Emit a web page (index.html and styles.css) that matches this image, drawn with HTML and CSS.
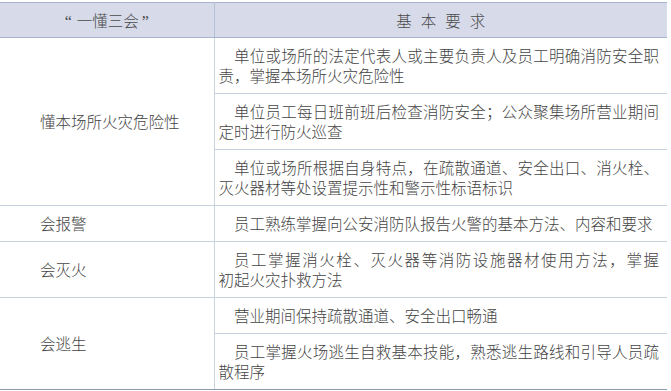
FILE: index.html
```html
<!DOCTYPE html>
<html lang="zh-CN">
<head>
<meta charset="utf-8">
<title>一懂三会</title>
<link rel="stylesheet" href="styles.css">
</head>
<body>
<table class="tbl">
  <colgroup><col class="col1"><col class="col2"></colgroup>
  <thead>
    <tr>
      <th class="h1"><span class="q ql">“</span>一懂三会<span class="q qr">”</span></th>
      <th class="h2"><span class="spaced">基本要求</span></th>
    </tr>
  </thead>
  <tbody>
    <tr>
      <td class="lab" rowspan="3">懂本场所火灾危险性</td>
      <td class="req"><div class="ln j ind">单位或场所的法定代表人或主要负责人及员工明确消防安全职</div><div class="ln">责，掌握本场所火灾危险性</div></td>
    </tr>
    <tr>
      <td class="req"><div class="ln j ind">单位员工每日班前班后检查消防安全；公众聚集场所营业期间</div><div class="ln">定时进行防火巡查</div></td>
    </tr>
    <tr>
      <td class="req"><div class="ln j ind">单位或场所根据自身特点，在疏散通道、安全出口、消火栓、</div><div class="ln">灭火器材等处设置提示性和警示性标语标识</div></td>
    </tr>
    <tr>
      <td class="lab">会报警</td>
      <td class="req"><div class="ln ind">员工熟练掌握向公安消防队报告火警的基本方法、内容和要求</div></td>
    </tr>
    <tr>
      <td class="lab">会灭火</td>
      <td class="req"><div class="ln j ind">员工掌握消火栓、灭火器等消防设施器材使用方法，掌握</div><div class="ln">初起火灾扑救方法</div></td>
    </tr>
    <tr>
      <td class="lab last" rowspan="2">会逃生</td>
      <td class="req"><div class="ln ind">营业期间保持疏散通道、安全出口畅通</div></td>
    </tr>
    <tr>
      <td class="req last"><div class="ln j ind">员工掌握火场逃生自救基本技能，熟悉逃生路线和引导人员疏</div><div class="ln">散程序</div></td>
    </tr>
  </tbody>
</table>
</body>
</html>
```

FILE: styles.css
```css
html, body {
  margin: 0;
  background: #ffffff;
}
body {
  padding-top: 2px;
  font-family: "Noto Sans CJK SC", "Liberation Serif", serif;
  font-size: 15.5px;
  font-weight: 300;
  color: #444444;
}
.tbl {
  border-collapse: collapse;
  table-layout: fixed;
  width: 667px;
}
.col1 { width: 214px; }
th {
  background: #d6dae9;
  height: 34px;
  padding: 0;
  font-weight: 300;
  text-align: center;
  color: #4a4a4a;
  border-top: 1px solid #a8b4ca;
  border-bottom: 1px solid #a8b4ca;
}
th.h1 { border-right: 1px solid #b4c1d6; }
.q {
  font-family: "Liberation Serif", serif;
  font-size: 16px;
}
.ql { margin-right: 5px; }
.qr { margin-left: 3px; }
.spaced {
  letter-spacing: 9px;
  padding-left: 9px;
}
td {
  border-top: 1px solid #c7d0dd;
  padding: 7px 8px 8px 4px;
  line-height: 20px;
  vertical-align: middle;
}
td.lab {
  padding-left: 40px;
  border-right: 1px solid #cad4e1;
}
td.last { border-bottom: 1px solid #8e9bac; }
.ln { white-space: nowrap; }
.ind { text-indent: 1em; }
.j {
  text-align: justify;
  text-align-last: justify;
  text-justify: inter-character;
}
```
